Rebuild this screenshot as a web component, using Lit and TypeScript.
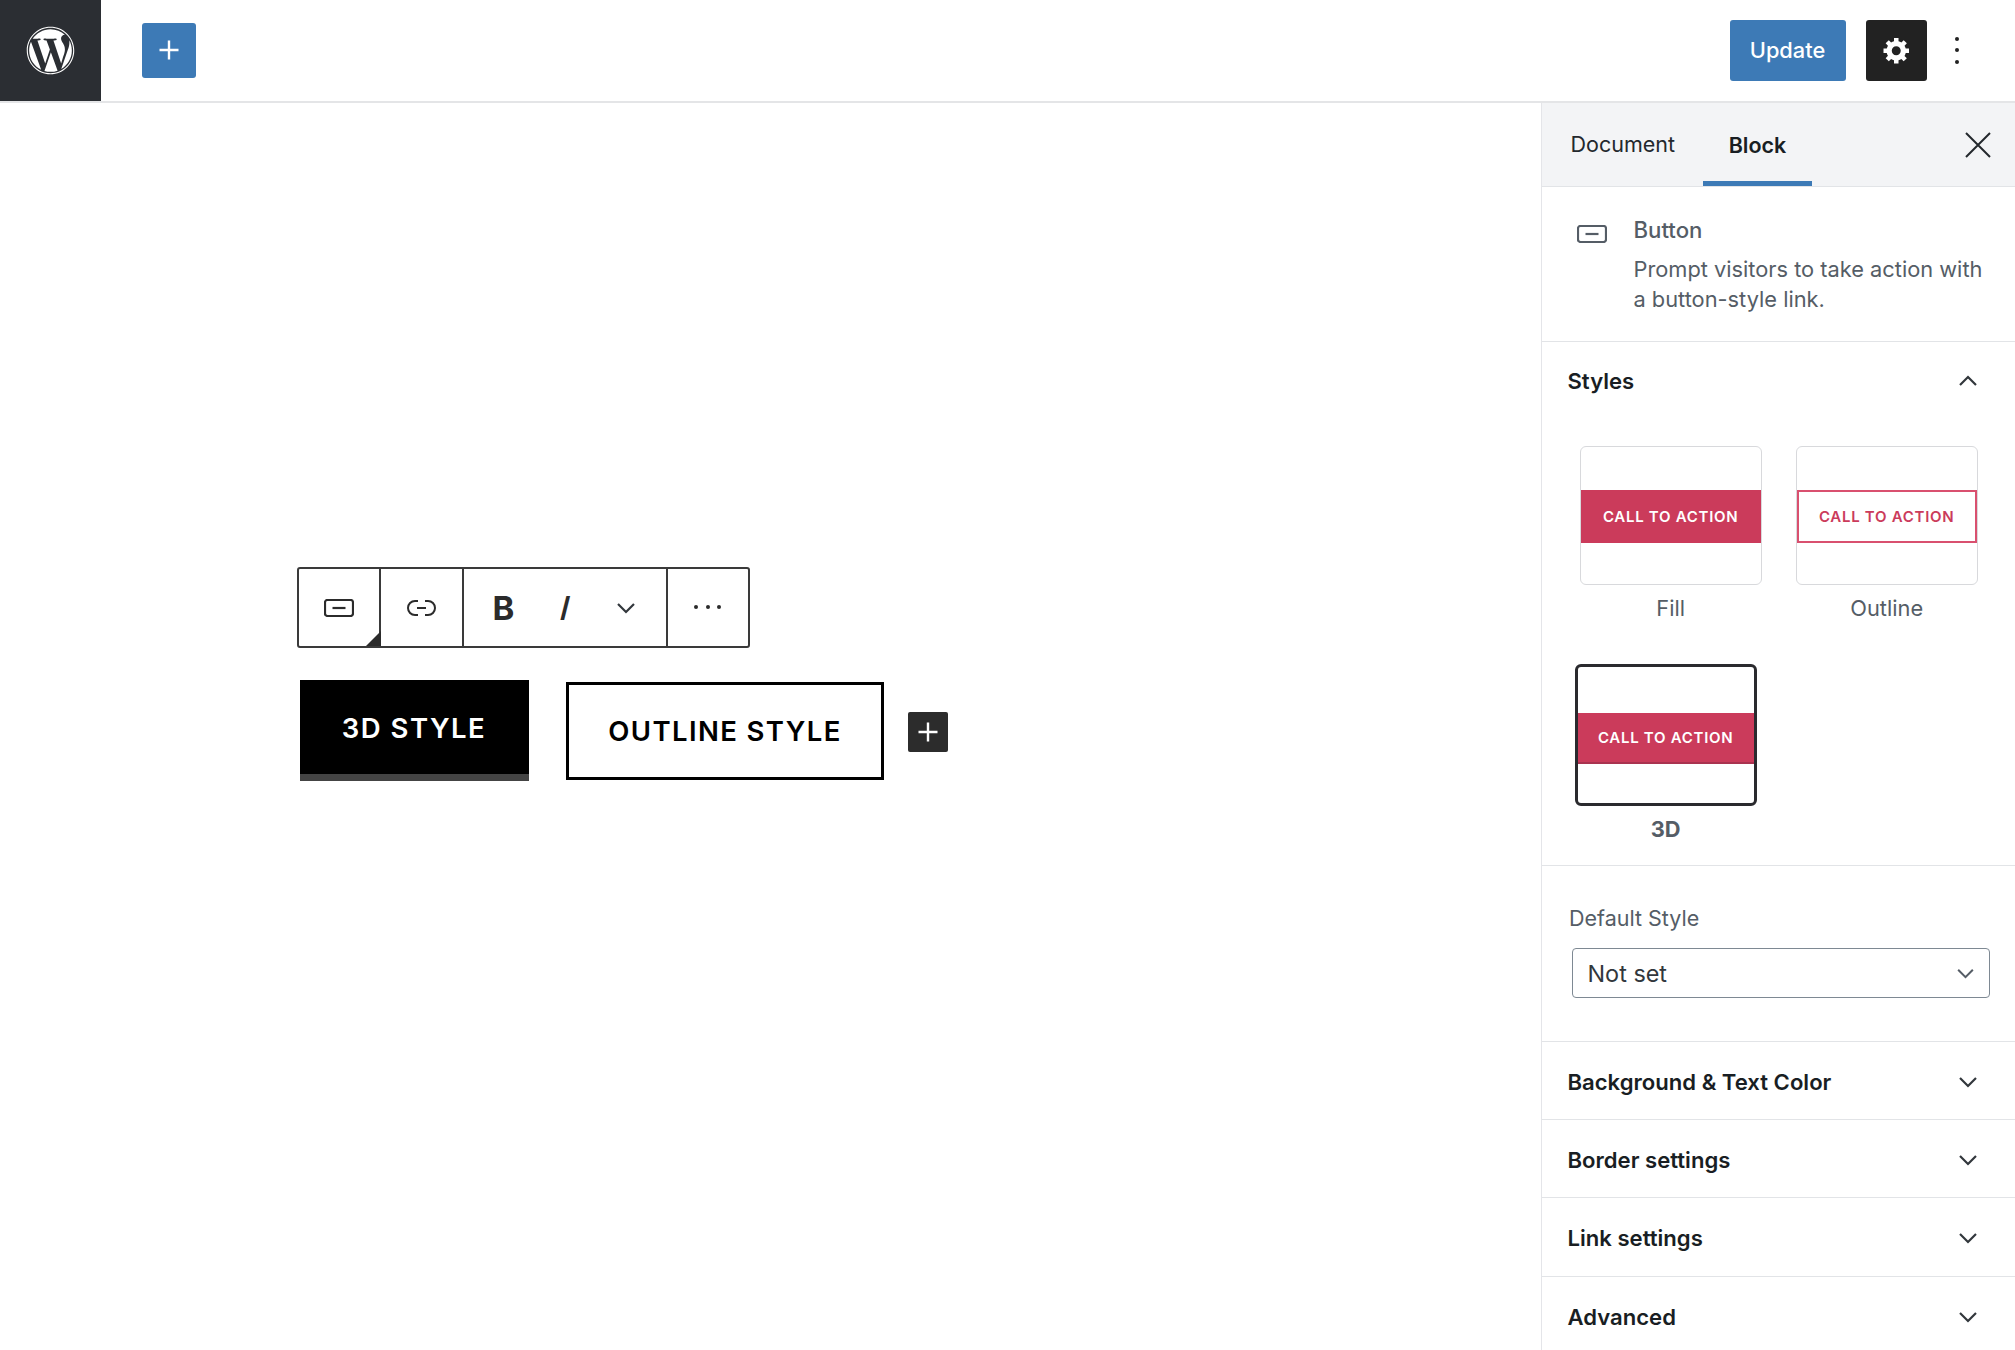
import { LitElement, html, css } from "lit";
import { customElement } from "lit/decorators.js";

const chevron = (cls = "chev") => html`<svg class=${cls} viewBox="0 0 20 12"><path d="M2 2 L10 10 L18 2" fill="none" stroke="currentColor" stroke-width="2.2"/></svg>`;
const plus = (size: number) => html`<svg width=${size} height=${size} viewBox="0 0 20 20"><path d="M10 0.5V19.5M0.5 10H19.5" fill="none" stroke="#fff" stroke-width="2.4"/></svg>`;
const btnIcon = (w: number, col: string) => html`<svg width=${w} height=${(w * 18) / 30} viewBox="0 0 30 18"><rect x="1" y="1" width="28" height="16" rx="2.5" fill="none" stroke=${col} stroke-width="2.2"/><path d="M8.5 9H21.5" stroke=${col} stroke-width="2.2"/></svg>`;

@customElement("app-root")
export class AppRoot extends LitElement {
  static styles = css`
    :host { display: block; width: 2015px; height: 1350px; overflow: hidden; background: #fff; font-family: Inter, "Liberation Sans", sans-serif; color: #191e23; }
    * { box-sizing: border-box; }
    .top { height: 103px; display: flex; align-items: center; border-bottom: 2px solid #e4e5e7; }
    .logo { width: 101px; height: 101px; background: #2b2e33; display: flex; align-items: center; justify-content: center; flex: none; }
    .add { width: 54px; height: 55px; margin-left: 41px; background: #3d7ab6; border-radius: 3px; display: flex; align-items: center; justify-content: center; margin-top: -1px; }
    .spacer { flex: 1; }
    .update { width: 116px; height: 61px; background: #3d7ab6; border-radius: 3px; color: #fff; display: flex; align-items: center; justify-content: center; font-size: 21.8px; font-weight: 500; margin-top: -1px; }
    .gear { width: 61px; height: 61px; background: #222; border-radius: 3px; margin-left: 20px; display: flex; align-items: center; justify-content: center; margin-top: -1px; padding-left: 1px; }
    .dots { width: 5px; height: 27px; margin-left: 28px; margin-right: 55.5px; display: flex; flex-direction: column; justify-content: space-between; margin-top: -1px; }
    .dots i { display: block; width: 4px; height: 4px; background: #222; border-radius: 50%; }
    .body { display: flex; height: 1247px; }
    .canvas { flex: 1; padding: 464px 0 0 296.5px; min-width: 0; }
    .toolbar { display: flex; width: 453px; height: 80.5px; border: 2px solid #3a3a3a; border-radius: 3px; }
    .grp { display: flex; align-items: center; justify-content: center; height: 100%; border-right: 2px solid #3a3a3a; position: relative; color: #2b2b2b; padding-top: 1.5px; }
    .grp:last-child { border-right: 0; }
    .g1, .g2 { width: 82.5px; }
    .g4 { flex: 1; }
    .g3 { width: 204px; justify-content: flex-start; }
    .corner { position: absolute; right: -2px; bottom: 0; width: 0; height: 0; border-left: 15px solid transparent; border-bottom: 15px solid #2b2b2b; }
    .b { width: 76px; text-align: center; font-size: 33px; font-weight: 700; line-height: 1; margin-left: 2px; }
    .i { width: 46px; text-align: center; font-size: 33px; font-weight: 500; line-height: 1; font-style: normal; transform: skewX(-14deg); }
    .more { width: 20px; margin-left: 28.5px; color: #2b2b2b; line-height: 0; }
    .hdots { display: flex; gap: 7.5px; margin-top: -2px; }
    .hdots i { display: block; width: 4px; height: 4px; background: #2b2b2b; border-radius: 50%; }
    .btns { display: flex; align-items: flex-start; margin: 32.5px 0 0 3px; }
    .b3d { width: 229px; height: 101px; background: #000; border-bottom: 7px solid #444; color: #fff; display: flex; align-items: center; justify-content: center; font-size: 27.5px; font-weight: 600; letter-spacing: 1.5px; padding-top: 1px; }
    .bout { width: 318px; height: 98px; margin: 2px 0 0 37.5px; border: 3.5px solid #000; color: #000; display: flex; align-items: center; justify-content: center; font-size: 27.5px; font-weight: 600; letter-spacing: 1.4px; }
    .badd { width: 40px; height: 40px; margin: 32px 0 0 24px; background: #2c2c2c; border-radius: 2px; display: flex; align-items: center; justify-content: center; }
    .side { width: 474px; flex: none; border-left: 1.6px solid #e4e5e9; }
    .tabs { height: 84px; background: #f3f4f6; border-bottom: 1.5px solid #e2e4e7; display: flex; padding-left: 28.5px; position: relative; font-size: 21.5px; }
    .tab { display: flex; align-items: center; height: 82.5px; }
    .tab.on { width: 109px; margin-left: 27.5px; justify-content: center; font-weight: 600; border-bottom: 5.5px solid #3d7ab6; padding-top: 5.5px; }
    .tab.doc { width: 105px; color: #23282d; }
    .x { margin-left: auto; margin-right: 24px; align-self: center; margin-top: 1px; }
    .info { height: 154.5px; border-bottom: 1.6px solid #e2e4e7; display: flex; padding: 27px 0 0 34.5px; color: #555d66; }
    .info svg { margin-top: 11px; flex: none; }
    .info-t { margin-left: 27px; font-size: 21.8px; }
    .info-n { line-height: 31px; font-weight: 500; font-size: 22.2px; }
    .info-d { line-height: 30px; margin-top: 9px; }
    .phead { display: flex; align-items: center; justify-content: space-between; padding: 2px 37px 0 25.5px; font-size: 22.1px; font-weight: 600; color: #191e23; }
    .chev { width: 20px; height: 12px; color: #32373c; }
    .up { transform: rotate(180deg); }
    .styles { border-bottom: 1.6px solid #e2e4e7; height: 524px; }
    .styles .phead { height: 77px; }
    .grid { display: grid; grid-template-columns: 182px 182px; column-gap: 34px; row-gap: 43px; padding: 27px 0 0 37.7px; }
    .item { display: flex; flex-direction: column; }
    .card { height: 139px; border: 1.5px solid #d8d9dc; border-radius: 6px; display: flex; align-items: center; padding-top: 3px; }
    .sel { height: 142px; width: 182px; margin-left: -5px; border: 3px solid #2a2a2e; padding-top: 7px; }
    .stripe { width: 100%; height: 52.5px; background: #cb3b5b; color: #fff; display: flex; align-items: center; justify-content: center; font-size: 15px; font-weight: 600; letter-spacing: 0.72px; }
    .stripe.o { background: #fff; color: #cb3b5b; border: 2px solid #d9506f; }
    .stripe.d { border-bottom: 2.5px solid #a93350; height: 51px; padding-top: 1px; }
    .lab { height: 26px; margin-top: 10px; text-align: center; font-size: 21.8px; line-height: 26px; color: #555d66; }
    .sel + .lab { margin-left: -5px; margin-right: 5px; font-weight: 700; margin-top: 10px; }
    .def { height: 176.5px; border-bottom: 1.6px solid #e2e4e7; padding: 39.5px 0 0 27px; }
    .def label { display: block; height: 26px; line-height: 26px; font-size: 21.5px; color: #555d66; }
    .select { width: 417.5px; height: 50px; margin: 17px 0 0 3px; border: 1.6px solid #7e8993; border-radius: 4px; display: flex; align-items: center; justify-content: space-between; padding: 0 14px 0 14.5px; font-size: 23.4px; color: #32373c; }
    .select .chev { width: 19px; height: 11px; color: #555d66; }
    .row { height: 78px; border-bottom: 1.6px solid #e2e4e7; }
    .row.l { height: 78.5px; }
    .row:last-child { border-bottom: 0; }
  `;

  render() {
    const card = (label: string, cls: string, selected = false) => html`
      <div class="item">
        <div class="card ${selected ? "sel" : ""}"><div class="stripe ${cls}">CALL TO ACTION</div></div>
        <div class="lab">${label}</div>
      </div>`;
    return html`
      <div class="top">
        <div class="logo">
          <svg width="57" height="57" viewBox="0 0 24 24" fill="#fff"><path d="M12.158,12.786L9.46,20.625c0.806,0.237,1.657,0.366,2.54,0.366c1.047,0,2.051-0.181,2.986-0.51c-0.024-0.038-0.046-0.079-0.065-0.124L12.158,12.786z M3.009,12c0,3.559,2.068,6.634,5.067,8.092L3.788,8.341C3.289,9.459,3.009,10.696,3.009,12z M18.069,11.546c0-1.112-0.399-1.881-0.741-2.48c-0.456-0.741-0.883-1.368-0.883-2.109c0-0.826,0.627-1.596,1.51-1.596c0.04,0,0.078,0.005,0.116,0.007C16.472,3.904,14.34,3.009,12,3.009c-3.141,0-5.904,1.612-7.512,4.052c0.211,0.007,0.41,0.011,0.579,0.011c0.94,0,2.396-0.114,2.396-0.114C7.947,6.93,8.004,7.642,7.52,7.699c0,0-0.487,0.057-1.029,0.085l3.274,9.739l1.968-5.901l-1.401-3.838c-0.484-0.028-0.943-0.085-0.943-0.085c-0.485-0.029-0.428-0.769,0.057-0.741c0,0,1.484,0.114,2.368,0.114c0.94,0,2.397-0.114,2.397-0.114c0.485-0.028,0.542,0.684,0.057,0.741c0,0-0.488,0.057-1.029,0.085l3.249,9.665l0.897-2.996C17.841,13.284,18.069,12.316,18.069,11.546z M19.889,7.686c0.039,0.286,0.06,0.593,0.06,0.924c0,0.912-0.171,1.938-0.684,3.22l-2.746,7.94c2.673-1.558,4.47-4.454,4.47-7.771C20.991,10.436,20.591,8.967,19.889,7.686z M12,2C6.486,2,2,6.486,2,12c0,5.514,4.486,10,10,10c5.514,0,10-4.486,10-10C22,6.486,17.514,2,12,2z M12,21.542c-5.261,0-9.542-4.281-9.542-9.542S6.739,2.458,12,2.458S21.542,6.739,21.542,12S17.261,21.542,12,21.542z"/></svg>
        </div>
        <div class="add">${plus(20)}</div>
        <div class="spacer"></div>
        <div class="update">Update</div>
        <div class="gear"><svg width="30" height="30" viewBox="0 0 20 20"><path fill="#fff" d="M18 12h-2.18c-.17.7-.44 1.35-.81 1.93l1.54 1.54-2.1 2.1-1.54-1.54c-.58.36-1.23.63-1.91.79V19H8v-2.18c-.68-.16-1.33-.43-1.91-.79l-1.54 1.54-2.12-2.12 1.54-1.54c-.36-.58-.63-1.23-.79-1.91H1V9.03h2.17c.16-.7.44-1.35.8-1.94L2.43 5.55l2.1-2.1 1.54 1.54c.58-.37 1.24-.64 1.93-.81V2h3v2.18c.68.16 1.33.43 1.91.79l1.54-1.54 2.12 2.12-1.54 1.54c.36.59.64 1.24.8 1.94H18V12zm-8.5 1.5c1.66 0 3-1.34 3-3s-1.34-3-3-3-3 1.34-3 3 1.34 3 3 3z"/></svg></div>
        <div class="dots"><i></i><i></i><i></i></div>
      </div>
      <div class="body">
        <div class="canvas">
          <div class="toolbar">
            <div class="grp g1">${btnIcon(30, "#2b2b2b")}<span class="corner"></span></div>
            <div class="grp g2"><svg width="31" height="18" viewBox="0 0 31 18" fill="none" stroke="#2b2b2b" stroke-width="2"><path d="M12 2H9a7 7 0 0 0 0 14h3M19 2h3a7 7 0 0 1 0 14h-3M11 9h9"/></svg></div>
            <div class="grp g3"><span class="b">B</span><span class="i">I</span><span class="more">${chevron()}</span></div>
            <div class="grp g4"><div class="hdots"><i></i><i></i><i></i></div></div>
          </div>
          <div class="btns">
            <div class="b3d">3D STYLE</div>
            <div class="bout">OUTLINE STYLE</div>
            <div class="badd">${plus(20)}</div>
          </div>
        </div>
        <div class="side">
          <div class="tabs">
            <div class="tab doc">Document</div>
            <div class="tab on">Block</div>
            <svg class="x" width="26" height="26" viewBox="0 0 26 26"><path d="M1 1L25 25M25 1L1 25" fill="none" stroke="#23282d" stroke-width="2"/></svg>
          </div>
          <div class="info">
            ${btnIcon(30, "#555d66")}
            <div class="info-t">
              <div class="info-n">Button</div>
              <div class="info-d">Prompt visitors to take action with<br />a button-style link.</div>
            </div>
          </div>
          <div class="styles">
            <div class="phead">Styles ${chevron("chev up")}</div>
            <div class="grid">
              ${card("Fill", "")}
              ${card("Outline", "o")}
              ${card("3D", "d", true)}
            </div>
          </div>
          <div class="def">
            <label>Default Style</label>
            <div class="select">Not set ${chevron()}</div>
          </div>
          <div class="row phead">Background &amp; Text Color ${chevron()}</div>
          <div class="row phead">Border settings ${chevron()}</div>
          <div class="row phead l">Link settings ${chevron()}</div>
          <div class="row phead">Advanced ${chevron()}</div>
        </div>
      </div>
    `;
  }
}
